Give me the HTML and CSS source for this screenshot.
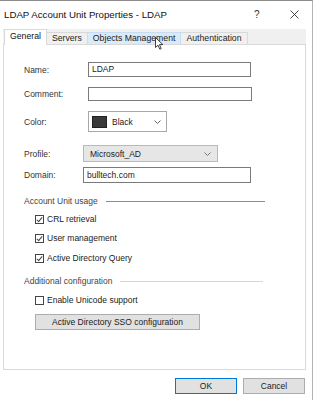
FILE: index.html
```html
<!DOCTYPE html>
<html lang="en">
<head>
    <meta charset="UTF-8">
    <title>LDAP Account Unit Properties - LDAP</title>
    <link rel="stylesheet" href="styles.css">
</head>
<body>
    <div class="window">
        <div class="titlebar">
            <span class="title">LDAP Account Unit Properties - LDAP</span>
            <span class="help">?</span>
            <span class="close">
                <svg width="9" height="9" viewBox="0 0 9 9"><path d="M0.5 0.5 L8.5 8.5 M8.5 0.5 L0.5 8.5" stroke="#333" stroke-width="0.9" fill="none"/></svg>
            </span>
        </div>
        <div class="tabstrip">
            <div class="tab active">General</div>
            <div class="tab">Servers</div>
            <div class="tab hover">Objects Management</div>
            <div class="tab">Authentication</div>
        </div>
        <div class="panel">
            <div class="field row-name">
                <label>Name:</label>
                <div class="textbox">LDAP</div>
            </div>
            <div class="field row-comment">
                <label>Comment:</label>
                <div class="textbox"></div>
            </div>
            <div class="field row-color">
                <label>Color:</label>
                <div class="combo color-combo">
                    <span class="swatch"></span>
                    <span class="combo-text">Black</span>
                    <svg class="chevron" width="7" height="4" viewBox="0 0 7 4"><path d="M0.5 0.5 L3.5 3.5 L6.5 0.5" fill="none" stroke="#666" stroke-width="1"/></svg>
                </div>
            </div>
            <div class="field short-label row-profile">
                <label>Profile:</label>
                <div class="combo profile-combo">
                    <span class="combo-text">Microsoft_AD</span>
                    <svg class="chevron" width="7" height="4" viewBox="0 0 7 4"><path d="M0.5 0.5 L3.5 3.5 L6.5 0.5" fill="none" stroke="#777" stroke-width="1"/></svg>
                </div>
            </div>
            <div class="field short-label row-domain">
                <label>Domain:</label>
                <div class="textbox">bulltech.com</div>
            </div>

            <div class="group-heading row-usage">
                <span>Account Unit usage</span>
                <span class="rule dark"></span>
            </div>
            <div class="check row-crl"><span class="box checked"></span>CRL retrieval</div>
            <div class="check row-user"><span class="box checked"></span>User management</div>
            <div class="check row-adq"><span class="box checked"></span>Active Directory Query</div>

            <div class="group-heading row-additional">
                <span>Additional configuration</span>
                <span class="rule"></span>
            </div>
            <div class="check row-unicode"><span class="box"></span>Enable Unicode support</div>
            <div class="sso-btn">Active Directory SSO configuration</div>
        </div>
        <div class="footer">
            <div class="btn default">OK</div>
            <div class="btn">Cancel</div>
        </div>
        <!-- mouse pointer hovering the Objects Management tab -->
        <svg class="cursor" width="9" height="13" viewBox="0 0 9 13">
            <path d="M0.5 0.5 L0.5 10.5 L3 8.2 L4.8 12.2 L6.2 11.6 L4.5 7.6 L7.8 7.6 Z" fill="#fff" stroke="#111" stroke-width="0.8"/>
        </svg>
    </div>
</body>
</html>
```

FILE: styles.css
```css
body {
    margin: 0;
    background: #ffffff;
    font-family: 'Liberation Sans', Arial, sans-serif;
    color: #1e1e1e;
}
.window {
    position: relative;
    width: 312px;
    height: 399px;
    border-top: 1px solid #8c8c8c;
    border-right: 1px solid #b4b4b4;
    background: #ffffff;
}
/* Title bar */
.titlebar {
    height: 28px;
    display: flex;
    align-items: center;
    padding-left: 4px;
}
.title {
    font-size: 9.7px;
    color: #111;
    flex: 1;
    margin-top: -2px;
}
.help {
    font-size: 10px;
    color: #333;
    width: 36px;
    margin-top: -2px;
}
.close {
    display: flex;
    width: 22px;
    margin-top: -2px;
}
/* Tabs */
.tabstrip {
    height: 15px;
    margin: 0 6px 0 3px;
    padding-left: 1px;
    background: #f0f0f0;
    display: flex;
    align-items: flex-end;
}
.tab {
    height: 12px;
    line-height: 11px;
    padding: 0 5px;
    font-size: 8.7px;
    color: #222;
    background: #f0f0f0;
    border: 1px solid #d9d9d9;
    border-bottom: none;
    border-left: none;
    box-sizing: border-box;
    white-space: nowrap;
}
.tab.active {
    position: relative;
    z-index: 1;
    height: 16px;
    line-height: 13px;
    margin-bottom: -1px;
    background: #ffffff;
    border-left: 1px solid #d9d9d9;
    color: #111;
}
.tab.hover {
    background: #d9eaf9;
    border-color: #c5dcf2;
}
/* Panel */
.panel {
    height: 326px;
    margin: 0 6px 0 3px;
    border: 1px solid #d9d9d9;
    background: #ffffff;
    box-sizing: border-box;
    padding: 17px 0 0 20px;
    font-size: 8.5px;
}
.field {
    display: flex;
    align-items: center;
}
.field label {
    width: 64px;
    flex-shrink: 0;
    color: #333;
}
.field.short-label label {
    width: 59px;
}
.textbox {
    width: 163px;
    height: 15px;
    line-height: 13px;
    border: 1px solid #7a7a7a;
    box-sizing: border-box;
    padding-left: 3px;
    color: #222;
}
.row-comment { margin-top: 10px; }
.row-comment .textbox { height: 14px; width: 164px; }
.row-color { margin-top: 10px; }
.row-profile { margin-top: 13px; }
.row-domain { margin-top: 5px; }
.row-domain .textbox { height: 16px; width: 168px; line-height: 14px; }

.combo {
    display: flex;
    align-items: center;
    box-sizing: border-box;
    border: 1px solid #a8a8a8;
}
.color-combo {
    width: 79px;
    height: 21px;
    padding: 0 5px 0 3px;
    background: #ffffff;
}
.swatch {
    width: 13px;
    height: 10px;
    background: #3a3a3a;
    border: 1px solid #222;
    margin-right: 5px;
}
.combo-text {
    flex: 1;
    color: #222;
}
.profile-combo {
    width: 135px;
    height: 17px;
    padding: 0 6px 0 6px;
    background: #e6e6e6;
    border-color: #b9b9b9;
}
.chevron {
    flex-shrink: 0;
}
/* Group headings */
.group-heading {
    display: flex;
    align-items: center;
    width: 241px;
    height: 12px;
    color: #444;
}
.rule {
    flex: 1;
    margin-left: 8px;
    border-top: 1px solid #d6d6d6;
}
.rule.dark {
    border-top-color: #8e8e8e;
}
.row-usage { margin-top: 12px; }
.row-additional { margin-top: 11px; width: 239px; }
/* Checkboxes */
.check {
    display: flex;
    align-items: center;
    height: 12px;
    margin-left: 11px;
    color: #222;
}
.box {
    width: 9px;
    height: 9px;
    border: 1px solid #444;
    margin-right: 3px;
    box-sizing: border-box;
    position: relative;
}
.box.checked::after {
    content: '';
    position: absolute;
    left: 2px;
    top: 0;
    width: 2px;
    height: 5px;
    border: solid #444;
    border-width: 0 1px 1px 0;
    transform: rotate(40deg);
}
.row-crl { margin-top: 6px; }
.row-user { margin-top: 7px; }
.row-adq { margin-top: 8px; }
.row-unicode { margin-top: 7px; }
.sso-btn {
    margin: 8px 0 0 11px;
    width: 165px;
    height: 16px;
    line-height: 14px;
    text-align: center;
    background: #e1e1e1;
    border: 1px solid #adadad;
    box-sizing: border-box;
    color: #222;
}
/* Footer buttons */
.footer {
    display: flex;
    justify-content: flex-end;
    gap: 6px;
    padding: 8px 7px 0 0;
}
.btn {
    width: 62px;
    height: 16px;
    line-height: 14px;
    box-sizing: border-box;
    text-align: center;
    font-size: 8.5px;
    background: #e1e1e1;
    border: 1px solid #adadad;
    color: #222;
}
.btn.default {
    border-color: #0078d7;
}
.cursor {
    position: absolute;
    left: 155px;
    top: 36px;
    z-index: 5;
}
```
